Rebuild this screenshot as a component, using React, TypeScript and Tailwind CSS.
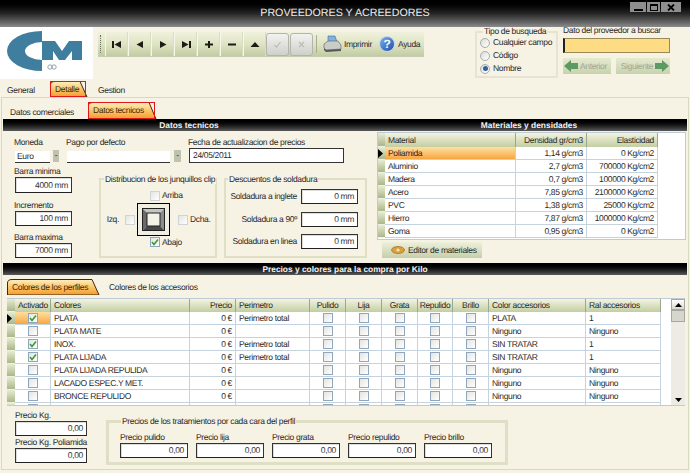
import React from "react";

const font = { fontFamily: '"Liberation Sans", Arial, sans-serif' };

function Check({ on = false, faint = false }: { on?: boolean; faint?: boolean }) {
  return (
    <span
      className={
        "inline-flex shrink-0 items-center justify-center w-[10px] h-[10px] border bg-gradient-to-br from-[#e4e4e0] to-white " +
        (faint ? "border-[#cfd4d8]" : "border-[#8fa6bd]")
      }
    >
      {on && (
        <svg width="8" height="8" viewBox="0 0 8 8">
          <path d="M1 4 L3 6.5 L7 1.5" fill="none" stroke="#3a9a3a" strokeWidth="1.6" />
        </svg>
      )}
    </span>
  );
}

function BlackBar({ children, className = "" }: { children?: React.ReactNode; className?: string }) {
  return (
    <div
      className={
        "h-[12px] bg-gradient-to-b from-black via-[#161616] to-[#5a5a5a] text-[#f2f2f2] font-bold text-[8.4px] tracking-normal leading-[12px] text-center " +
        className
      }
    >
      {children}
    </div>
  );
}

function Field({ value = "", className = "" }: { value?: string; className?: string }) {
  return (
    <div
      className={
        "border border-[#333] border-b-[#222] bg-white text-right pr-[3px] text-[#333] flex items-center justify-end shadow-[inset_1px_1px_0_#ddd] " +
        className
      }
    >
      {value}
    </div>
  );
}

function OrangeTab({
  w,
  h,
  label,
  red = false,
  id,
}: {
  w: number;
  h: number;
  label: string;
  red?: boolean;
  id: string;
}) {
  return (
    <div className="relative shrink-0 text-[#3a2a10] flex items-center" style={{ width: w, height: h }}>
      <svg className="absolute inset-0" width={w} height={h} viewBox={`0 0 ${w} ${h}`}>
        <defs>
          <linearGradient id={id} x1="0" y1="0" x2="0" y2="1">
            <stop offset="0" stopColor="#fff0c0" />
            <stop offset="0.5" stopColor="#fcc566" />
            <stop offset="1" stopColor="#f59a2e" />
          </linearGradient>
        </defs>
        <path
          d={`M0.5 ${h} V4 Q0.5 0.5 5 0.5 H${w - 8} L${w - 1} ${h} Z`}
          fill={`url(#${id})`}
          stroke="#3a2a1a"
          strokeWidth="1"
        />
        {red && <rect x="0.5" y="0.5" width={w - 3} height={h - 1} fill="none" stroke="#e01818" strokeWidth="1" />}
      </svg>
      <span className="relative pl-[5px] whitespace-nowrap">{label}</span>
    </div>
  );
}

function NavIcon({ d }: { d: string }) {
  return (
    <div className="w-[23px] h-full flex items-center justify-center border-r border-[#d8dec0] border-l border-l-[#f6f7e8]">
      <svg width="10" height="9" viewBox="0 0 10 9">
        <path d={d} fill="#1c1c14" />
      </svg>
    </div>
  );
}

function GrayBtn({ d }: { d: string }) {
  return (
    <div className="w-[23px] h-[23px] rounded-[3px] border border-[#b4b4ac] bg-gradient-to-b from-[#f2f2f0] to-[#cfcfcb] flex items-center justify-center mr-[0.5px]">
      <svg width="9" height="9" viewBox="0 0 9 9">
        <path d={d} fill="none" stroke="#bcbcb4" strokeWidth="1.2" />
      </svg>
    </div>
  );
}

function Printer() {
  return (
    <svg width="19" height="18" viewBox="0 0 19 18" className="shrink-0">
      <path d="M5 1 L12 1 L14 7 L5 7 Z" fill="#7fb2e0" stroke="#4a6a8a" strokeWidth="0.6" />
      <path d="M1 9 L5 6 L15 6 L18 10 L18 14 L3 15 L1 13 Z" fill="#c9ccc8" stroke="#6a6e70" strokeWidth="0.7" />
      <path d="M1 13 L3 15 L18 14 L18 16 L3 17 L1 15 Z" fill="#55585a" />
    </svg>
  );
}

function Radio({ on = false }: { on?: boolean }) {
  return (
    <span className="w-[10px] h-[10px] shrink-0 rounded-full border border-[#a6aeb4] bg-gradient-to-br from-[#dedcd4] to-white inline-flex items-center justify-center">
      {on && <span className="w-[5px] h-[5px] rounded-full bg-[#35609a]" />}
    </span>
  );
}

function Arrow({ dir }: { dir: "l" | "r" }) {
  return (
    <svg width="14" height="12" viewBox="0 0 14 12" className="shrink-0">
      <path
        d={dir === "l" ? "M0 6 L7 0 V3 H14 V9 H7 V12 Z" : "M14 6 L7 0 V3 H0 V9 H7 V12 Z"}
        fill="#5b9a62"
      />
    </svg>
  );
}

function Frame() {
  return (
    <div className="w-[33px] h-[33px] border border-black bg-[#f0eee2] flex items-center justify-center">
      <svg width="23" height="23" viewBox="0 0 23 23">
        <path d="M0 0 H23 L18 5 H5 Z" fill="#c4c4c0" />
        <path d="M0 0 V23 L5 18 V5 Z" fill="#6a6a6a" />
        <path d="M23 0 V23 L18 18 V5 Z" fill="#8c8c8c" />
        <path d="M0 23 H23 L18 18 H5 Z" fill="#484848" />
        <rect x="0.5" y="0.5" width="22" height="22" fill="none" stroke="#222" />
        <rect x="5" y="5" width="13" height="13" fill="#f4f2e8" stroke="#222" />
      </svg>
    </div>
  );
}

const materials = [
  ["Poliamida", "1,14 g/cm3", "0 Kg/cm2"],
  ["Aluminio", "2,7 g/cm3", "700000 Kg/cm2"],
  ["Madera", "0,7 g/cm3", "100000 Kg/cm2"],
  ["Acero", "7,85 g/cm3", "2100000 Kg/cm2"],
  ["PVC", "1,38 g/cm3", "25000 Kg/cm2"],
  ["Hierro", "7,87 g/cm3", "1000000 Kg/cm2"],
  ["Goma", "0,95 g/cm3", "0 Kg/cm2"],
];

const colors: [string, boolean, string, string, string][] = [
  ["PLATA", true, "Perimetro total", "PLATA", "1"],
  ["PLATA MATE", false, "", "Ninguno", "Ninguno"],
  ["INOX.", true, "Perimetro total", "SIN TRATAR", "1"],
  ["PLATA LIJADA", true, "Perimetro total", "SIN TRATAR", "1"],
  ["PLATA LIJADA REPULIDA", false, "", "Ninguno", "Ninguno"],
  ["LACADO ESPEC.Y MET.", false, "", "Ninguno", "Ninguno"],
  ["BRONCE REPULIDO", false, "", "Ninguno", "Ninguno"],
  ["", false, "", "", ""],
];

const headCell =
  "h-full bg-gradient-to-b from-[#f3f4e2] to-[#c3cea2] border-r border-[#9aa88c] flex items-center px-[3px] whitespace-nowrap";
const indicator = "h-full bg-gradient-to-b from-[#e8ebd2] to-[#a9b78a] border-b border-[#eef0e0]";
const matCols = "grid grid-cols-[7px_131px_71px_71px]";
const colCols = "grid grid-cols-[8px_36px_139px_46px_74px_36px_36px_36px_35px_36px_97px_75px]";
const rowCell = "h-full border-r border-b border-[#c5d3de] flex items-center px-[3px] whitespace-nowrap overflow-hidden";

export default function App() {
  return (
    <div
      className="w-[690px] h-[473px] overflow-hidden bg-[#f6f2e4] text-[8.5px] tracking-[-0.35px] text-[#2a2a2a] [text-rendering:geometricPrecision]"
      style={font}
    >
      {/* title bar */}
      <div className="h-[27px] grid grid-cols-[1fr_auto_1fr] items-start bg-gradient-to-b from-black via-[#262626] to-[#8c8c8c]">
        <div />
        <div className="text-[#ececec] text-[10.7px] tracking-normal leading-[27px]">PROVEEDORES Y ACREEDORES</div>
        <div className="flex justify-end pr-[9px] pt-[2px] gap-[1px]">
          <div className="w-[16px] h-[10px] bg-[#8e8e8e] flex items-end justify-center pb-[1px]">
            <div className="w-[9px] h-[2px] bg-black" />
          </div>
          <div className="w-[13px] h-[10px] bg-[#8e8e8e] flex items-center justify-center">
            <div className="w-[8px] h-[7px] border border-black border-t-2" />
          </div>
          <div className="w-[20px] h-[10px] bg-[#8e8e8e] flex items-center justify-center">
            <svg width="8" height="7" viewBox="0 0 8 7">
              <path d="M1 0.5 L7 6.5 M7 0.5 L1 6.5" stroke="#000" strokeWidth="1.8" />
            </svg>
          </div>
        </div>
      </div>

      {/* header */}
      <div className="h-[54px] flex items-start">
        <div className="w-[93px] h-[52px] bg-white shrink-0">
          <svg width="93" height="52" viewBox="0 0 93 52">
            <path d="M42 4 A35 20 0 0 0 42 44 L42 33 A17 9 0 0 1 42 15 Z" fill="#3f7e9e" />
            <path d="M42 14 H55 L62 24 L69 14 H82 V33 H72 V24 L65 33 H59 L53 24 V33 H42 Z" fill="#3f7e9e" />
            <circle cx="50" cy="40" r="2.2" fill="none" stroke="#7a909c" strokeWidth="0.8" />
            <circle cx="54" cy="40" r="2.2" fill="none" stroke="#7a909c" strokeWidth="0.8" />
          </svg>
        </div>

        <div className="ml-[5px] mt-[5px] w-[326px] h-[25px] shrink-0 flex items-center bg-gradient-to-b from-[#f0f1dd] via-[#dfe4c4] to-[#c2cca3] border-b border-[#c6cdb0]">
          <div className="w-[5px] h-[18px] ml-[2px] border-l border-dotted border-[#66705a]" />
          <NavIcon d="M0 1 H2 V8 H0 Z M9 1 V8 L2.5 4.5 Z" />
          <NavIcon d="M8 1 V8 L1.5 4.5 Z" />
          <NavIcon d="M2 1 V8 L8.5 4.5 Z" />
          <NavIcon d="M1 1 V8 L7.5 4.5 Z M8 1 H10 V8 H8 Z" />
          <NavIcon d="M4 1 H6 V3.5 H9 V5.5 H6 V8 H4 V5.5 H1 V3.5 H4 Z" />
          <NavIcon d="M1 3.5 H9 V5.5 H1 Z" />
          <NavIcon d="M5 2 L9.5 7 H0.5 Z" />
          <GrayBtn d="M1.5 5 L3.5 7 L7.5 2" />
          <GrayBtn d="M2 2 L7 7 M7 2 L2 7" />
          <div className="w-[1px] h-[18px] bg-[#a9b08e] ml-[3px] mr-[6px]" />
          <Printer />
          <span className="ml-[2px] w-[35px] whitespace-nowrap">Imprimir</span>
          <span className="w-[16px] h-[16px] rounded-full bg-gradient-to-br from-[#7fb0ea] to-[#1c4fa8] border border-[#c4d6ee] text-white font-bold text-[12px] flex items-center justify-center">
            ?
          </span>
          <span className="ml-[3px]">Ayuda</span>
        </div>

        <fieldset className="ml-[51px] min-w-0 w-[83px] h-[51px] shrink-0 border-2 border-[#e6e3d2] pl-[3px] rounded-[1px]">
          <legend className="ml-[3px] px-[1px] leading-[9px] whitespace-nowrap">Tipo de busqueda</legend>
          <div className="flex items-center gap-[3px] h-[13px] whitespace-nowrap">
            <Radio />
            <span>Cualquier campo</span>
          </div>
          <div className="flex items-center gap-[3px] h-[13px]">
            <Radio />
            <span>Código</span>
          </div>
          <div className="flex items-center gap-[3px] h-[13px]">
            <Radio on />
            <span>Nombre</span>
          </div>
        </fieldset>

        <div className="ml-[5px] w-[107px] shrink-0">
          <div className="h-[10px] leading-[9px] mt-[-1px] mb-[2px] whitespace-nowrap">Dato del proveedor a buscar</div>
          <div className="h-[15px] bg-[#fedc83] border border-[#9a8a5a] border-l-2 border-l-[#222]" />
          <div className="mt-[5px] flex gap-[5px] text-[#9fa596]">
            <div className="w-[48px] h-[16px] bg-gradient-to-b from-[#e6eacf] to-[#c8d2ae] flex items-center gap-[2px] pl-[1px]">
              <Arrow dir="l" />
              <span>Anterior</span>
            </div>
            <div className="w-[54px] h-[16px] bg-gradient-to-b from-[#e6eacf] to-[#c8d2ae] flex items-center justify-end gap-[2px] pr-[1px]">
              <span>Siguiente</span>
              <Arrow dir="r" />
            </div>
          </div>
        </div>
      </div>

      {/* top tabs */}
      <div className="h-[16px] flex items-end pl-[7px]">
        <div className="w-[43px] h-[14px] flex items-center">General</div>
        <OrangeTab id="t1" w={38} h={16} label="Detalle" red />
        <div className="ml-[10px] h-[14px] flex items-center">Gestion</div>
      </div>

      {/* panel */}
      <div className="mx-[1px] h-[373px] border border-[#d9d9bb] px-[1px] bg-[#f6f2e4]">
        {/* sub tabs */}
        <div className="h-[21px] flex items-end pl-[7px]">
          <div className="w-[78px] h-[14px] flex items-center whitespace-nowrap">Datos comerciales</div>
          <OrangeTab id="t2" w={69} h={17} label="Datos tecnicos" red />
        </div>
        <BlackBar className="flex">
          <div className="w-[372px]">Datos tecnicos</div>
          <div className="flex-1 pr-[4px]">Materiales y densidades</div>
        </BlackBar>

        <div className="h-[132px] flex">
          {/* left form */}
          <div className="w-[374px] shrink-0 pl-[12px] pt-[6px]">
            <div className="flex">
              <div className="w-[51px]">
                <div className="h-[10px] leading-[10px] ml-[-1px]">Moneda</div>
                <div className="mt-[2px] h-[14px] flex items-end">
                  <div className="w-[35px] h-[12px] bg-white border-b border-[#333] pl-[2px] leading-[11px]">Euro</div>
                  <div className="ml-[3px] mb-[1px] w-[6px] h-[12px] bg-[#bfc2ae] text-center leading-[11px]">-</div>
                </div>
              </div>
              <div className="w-[122px]">
                <div className="h-[10px] leading-[10px]">Pago por defecto</div>
                <div className="mt-[2px] h-[14px] flex items-end pl-[1px]">
                  <div className="w-[103px] h-[12px] bg-white border-b border-[#333]" />
                  <div className="ml-[4px] mb-[1px] w-[7px] h-[12px] bg-[#bfc2ae] text-center leading-[11px]">-</div>
                </div>
              </div>
              <div>
                <div className="h-[10px] leading-[10px]">Fecha de actualizacion de precios</div>
                <div className="ml-[1px] w-[155px] h-[15px] border border-[#333] bg-white pl-[3px] leading-[13px] mt-[1px]">
                  24/05/2011
                </div>
              </div>
            </div>

            <div className="flex mt-[3px]">
              <div className="w-[84px] shrink-0">
                <div className="h-[10px] leading-[10px] ml-[-1px]">Barra minima</div>
                <Field value="4000 mm" className="w-[57px] h-[16px] mt-[1px]" />
                <div className="h-[10px] leading-[10px] ml-[-1px] mt-[7px]">Incremento</div>
                <Field value="100 mm" className="w-[57px] h-[15px] mt-[1px]" />
                <div className="h-[10px] leading-[10px] ml-[-1px] mt-[6px]">Barra maxima</div>
                <Field value="7000 mm" className="w-[57px] h-[15px] mt-[1px]" />
              </div>

              <fieldset className="min-w-0 w-[118px] h-[84px] mt-[8px] shrink-0 border-2 border-[#dfdfc6] px-[1px]">
                <legend className="ml-[2px] px-[1px] leading-[10px] whitespace-nowrap">Distribucion de los junquillos clip</legend>
                <div className="grid grid-cols-[35px_33px_46px] grid-rows-[15px_33px_12px] items-center mt-[4px]">
                  <div className="col-start-2 flex items-center gap-[2px] ml-[13px] whitespace-nowrap">
                    <Check faint />
                    <span>Arriba</span>
                  </div>
                  <div className="col-start-1 row-start-2 flex items-center justify-end gap-[6px] pr-[2px]">
                    <span>Izq.</span>
                    <Check faint />
                  </div>
                  <div className="col-start-2 row-start-2">
                    <Frame />
                  </div>
                  <div className="col-start-3 row-start-2 flex items-center gap-[2px] pl-[8px]">
                    <Check faint />
                    <span>Dcha.</span>
                  </div>
                  <div className="col-start-2 row-start-3 flex items-center gap-[2px] ml-[13px] whitespace-nowrap">
                    <Check on />
                    <span>Abajo</span>
                  </div>
                </div>
              </fieldset>

              <fieldset className="min-w-0 ml-[7px] w-[143px] h-[84px] mt-[8px] shrink-0 border-2 border-[#dfdfc6] pr-[7px]">
                <legend className="ml-[2px] px-[1px] leading-[10px] whitespace-nowrap">Descuentos de soldadura</legend>
                <div className="flex flex-col gap-[7.5px] mt-[5px]">
                  {["Soldadura a inglete", "Soldadura a 90º", "Soldadura en linea"].map((t) => (
                    <div key={t} className="flex items-center justify-end gap-[4px]">
                      <span className="whitespace-nowrap">{t}</span>
                      <Field value="0 mm" className="w-[57px] h-[15px]" />
                    </div>
                  ))}
                </div>
              </fieldset>
            </div>
          </div>

          {/* materials */}
          <div className="flex-1 pt-[1px] pr-[1px]">
            <div className="h-[108px] bg-white border border-[#bfcbd4] overflow-hidden">
              <div className={matCols + " h-[14px]"}>
                <div className={indicator} />
                <div className={headCell}>Material</div>
                <div className={headCell + " justify-end"}>Densidad gr/cm3</div>
                <div className={headCell + " justify-end"}>Elasticidad</div>
              </div>
              {materials.map((m, i) => (
                <div key={m[0]} className={matCols + " h-[13px]"}>
                  <div className={indicator + " flex items-center"}>
                    {i === 0 && (
                      <svg width="6" height="9" viewBox="0 0 6 9">
                        <path d="M0 0 L5 4.5 L0 9 Z" fill="#000" />
                      </svg>
                    )}
                  </div>
                  <div className={rowCell + (i === 0 ? " bg-gradient-to-b from-[#fde0a0] to-[#f7a63c]" : "")}>{m[0]}</div>
                  <div className={rowCell + " justify-end"}>{m[1]}</div>
                  <div className={rowCell + " justify-end"}>{m[2]}</div>
                </div>
              ))}
            </div>
            <div className="mt-[2px] ml-[5px] w-[100px] h-[16px] bg-gradient-to-b from-[#eef0da] to-[#c6cfa9] flex items-center pl-[9px] gap-[3px] whitespace-nowrap">
              <svg width="14" height="10" viewBox="0 0 14 10" className="shrink-0">
                <ellipse cx="7" cy="5" rx="6.5" ry="3.5" fill="#d9a03c" stroke="#a46a1c" strokeWidth="0.7" />
                <circle cx="7" cy="5" r="1.6" fill="#f6e6b0" />
              </svg>
              <span>Editor de materiales</span>
            </div>
          </div>
        </div>

        <BlackBar>Precios y colores para la compra por Kilo</BlackBar>

        {/* perfiles tabs */}
        <div className="h-[20px] flex items-end pl-[4px]">
          <OrangeTab id="t3" w={93} h={16} label="Colores de los perfiles" />
          <div className="ml-[9px] h-[16px] flex items-center">Colores de los accesorios</div>
        </div>

        {/* color grid */}
        <div className="mt-[3px] ml-[4px] mr-[2px] h-[108px] bg-white border-t border-b border-[#bfcbd4] flex overflow-hidden">
          <div className="w-[664px] shrink-0">
            <div className={colCols + " h-[13px]"}>
              <div className={indicator} />
              {["Activado", "Colores"].map((h) => (
                <div key={h} className={headCell}>{h}</div>
              ))}
              <div className={headCell + " justify-end"}>Precio</div>
              <div className={headCell}>Perimetro</div>
              {["Pulido", "Lija", "Grata", "Repulido", "Brillo"].map((h) => (
                <div key={h} className={headCell + " justify-center"}>{h}</div>
              ))}
              <div className={headCell}>Color accesorios</div>
              <div className={headCell}>Ral accesorios</div>
            </div>
            {colors.map((c, i) => (
              <div key={i} className={colCols + " h-[13px]"}>
                <div className={indicator + " flex items-center"}>
                  {i === 0 && (
                    <svg width="6" height="9" viewBox="0 0 6 9">
                      <path d="M0 0 L5 4.5 L0 9 Z" fill="#000" />
                    </svg>
                  )}
                </div>
                <div className={rowCell + " justify-center" + (i === 0 ? " bg-gradient-to-b from-[#fde0a0] to-[#f7a63c]" : "")}>
                  <Check on={c[1]} />
                </div>
                <div className={rowCell}>{c[0]}</div>
                <div className={rowCell + " justify-end"}>{c[0] ? "0 €" : ""}</div>
                <div className={rowCell}>{c[2]}</div>
                {[0, 1, 2, 3, 4].map((k) => (
                  <div key={k} className={rowCell + " justify-center"}>
                    <Check />
                  </div>
                ))}
                <div className={rowCell}>{c[3]}</div>
                <div className={rowCell}>{c[4]}</div>
              </div>
            ))}
          </div>
          <div className="w-[14px] bg-[#ecebe4] flex flex-col justify-between">
            <div>
              <div className="h-[11px] bg-gradient-to-b from-white to-[#d8d8d0] border border-[#a8a8a0] flex items-center justify-center">
                <svg width="7" height="4" viewBox="0 0 7 4"><path d="M3.5 0 L7 4 H0 Z" fill="#000" /></svg>
              </div>
              <div className="h-[12px] bg-[#d6d6cc] border border-[#a8a8a0]" />
            </div>
            <div className="h-[11px] flex items-center justify-center">
              <svg width="7" height="4" viewBox="0 0 7 4"><path d="M3.5 4 L7 0 H0 Z" fill="#000" /></svg>
            </div>
          </div>
        </div>

        {/* bottom */}
        <div className="flex pl-[12px] pt-[4px]">
          <div className="w-[91px] shrink-0">
            <div className="h-[10px] leading-[10px]">Precio Kg.</div>
            <Field value="0,00" className="w-[72px] h-[15px] mt-[1px]" />
            <div className="h-[10px] leading-[10px] mt-[1px]">Precio Kg. Poliamida</div>
            <Field value="0,00" className="w-[72px] h-[15px] mt-[1px]" />
          </div>
          <fieldset className="min-w-0 w-[402px] h-[48px] mt-[7px] border-[3px] border-[#dfdfc6] pl-[11px]">
            <legend className="ml-[1px] px-[1px] leading-[9px] whitespace-nowrap">Precios de los tratamientos por cada cara del perfil</legend>
            <div className="flex gap-[8px] mt-[6px]">
              {["Precio pulido", "Precio lija", "Precio grata", "Precio repulido", "Precio brillo"].map((t) => (
                <div key={t} className="w-[68px]">
                  <div className="h-[10px] leading-[10px]">{t}</div>
                  <Field value="0,00" className="w-[68px] h-[15px] mt-[1px]" />
                </div>
              ))}
            </div>
          </fieldset>
        </div>
      </div>
    </div>
  );
}
